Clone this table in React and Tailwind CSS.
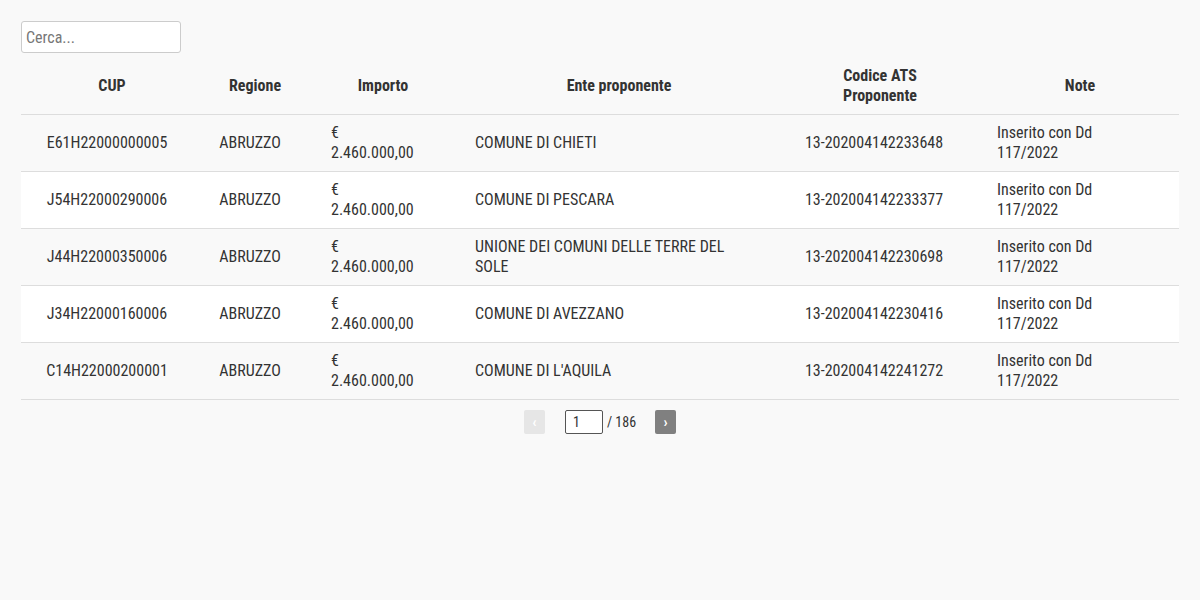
import React from "react";

const rows = [
  { cup: "E61H22000000005", ente: ["COMUNE DI CHIETI"], ats: "13-202004142233648" },
  { cup: "J54H22000290006", ente: ["COMUNE DI PESCARA"], ats: "13-202004142233377" },
  { cup: "J44H22000350006", ente: ["UNIONE DEI COMUNI DELLE TERRE DEL", "SOLE"], ats: "13-202004142230698" },
  { cup: "J34H22000160006", ente: ["COMUNE DI AVEZZANO"], ats: "13-202004142230416" },
  { cup: "C14H22000200001", ente: ["COMUNE DI L'AQUILA"], ats: "13-202004142241272" },
];

function Lines({ items }) {
  return items.map((t, i) => (
    <React.Fragment key={i}>
      {i > 0 && <br />}
      {t}
    </React.Fragment>
  ));
}

export default function App() {
  return (
    <div
      className="min-h-[600px] w-[1200px] bg-[#f9f9f9] px-[21px] pt-[21px] text-[16px] leading-5 text-[#333] [font-stretch:condensed]"
      style={{ fontFamily: '"Roboto Condensed", Roboto, "DejaVu Sans", sans-serif' }}
    >
      <input
        type="text"
        placeholder="Cerca..."
        className="block h-[32px] w-[160px] rounded-[3px] border border-[#ccc] bg-white px-[4px] text-[16px] text-[#333] placeholder:text-[#777] outline-none"
      />
      <table className="mt-[9px] w-[1158px] table-fixed border-collapse">
        <colgroup>
          <col className="w-[182px]" />
          <col className="w-[104px]" />
          <col className="w-[152px]" />
          <col className="w-[320px]" />
          <col className="w-[202px]" />
          <col className="w-[198px]" />
        </colgroup>
        <thead>
          <tr className="border-b border-[#ddd]">
            <th className="pt-[4px] pb-[8px] text-center font-bold">CUP</th>
            <th className="pt-[4px] pb-[8px] text-center font-bold">Regione</th>
            <th className="pt-[4px] pb-[8px] text-center font-bold">Importo</th>
            <th className="pt-[4px] pb-[8px] text-center font-bold">Ente proponente</th>
            <th className="pt-[4px] pb-[8px] text-center font-bold">
              Codice ATS
              <br />
              Proponente
            </th>
            <th className="pt-[4px] pb-[8px] text-center font-bold">
              <div className="h-[40px] leading-[40px]">Note</div>
            </th>
          </tr>
        </thead>
        <tbody>
          {rows.map((r, i) => (
            <tr key={r.cup} className={`border-b border-[#ddd] ${i % 2 === 1 ? "bg-white" : "bg-[#f9f9f9]"}`}>
              <td className="py-2 pr-[10px] text-center align-middle">{r.cup}</td>
              <td className="py-2 pr-[10px] text-center align-middle">ABRUZZO</td>
              <td className="py-2 pl-[24px] text-left align-middle">
                €
                <br />
                2.460.000,00
              </td>
              <td className="py-2 pl-[16px] text-left align-middle">
                <Lines items={r.ente} />
              </td>
              <td className="py-2 pr-[12px] text-center align-middle">{r.ats}</td>
              <td className="py-2 pl-[16px] text-left align-middle">
                Inserito con Dd
                <br />
                117/2022
              </td>
            </tr>
          ))}
        </tbody>
      </table>
      <div className="mt-[10px] flex items-center justify-center">
        <button className="flex h-[24px] w-[21px] items-center justify-center rounded-[2px] bg-[#e6e6e6] text-[15px] font-bold text-white">
          ‹
        </button>
        <input
          type="text"
          defaultValue="1"
          className="ml-[20px] h-[24px] w-[38px] rounded-[2px] border border-[#555] bg-white px-[7px] text-[14px] text-[#333] outline-none"
        />
        <span className="ml-[4px] text-[14px] text-[#333]">/ 186</span>
        <button className="ml-[19px] flex h-[24px] w-[21px] items-center justify-center rounded-[2px] bg-[#808080] text-[15px] font-bold text-white">
          ›
        </button>
      </div>
    </div>
  );
}
